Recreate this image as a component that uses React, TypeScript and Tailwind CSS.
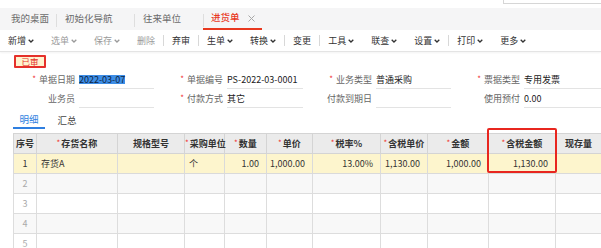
import React from "react";

const tabs = [
  { label: "我的桌面", w: "w-[57px]", pl: "pl-[11px]" },
  { label: "初始化导航", w: "w-[78px]", pl: "pl-[8px]" },
  { label: "往来单位", w: "w-[69px]", pl: "pl-[8px]" },
];

const tools = [
  { label: "新增", chev: true },
  { label: "选单", chev: true, off: true },
  { label: "保存", chev: true, off: true },
  { label: "删除", off: true, sep: true },
  { label: "弃审", sep: true },
  { label: "生单", chev: true },
  { label: "转换", chev: true, sep: true },
  { label: "变更", sep: true },
  { label: "工具", chev: true },
  { label: "联查", chev: true },
  { label: "设置", chev: true, sep: true },
  { label: "打印", chev: true },
  { label: "更多", chev: true },
];

const fieldRows = [
  [
    { label: "单据日期", req: true, value: "2022-03-07", selected: true },
    { label: "单据编号", req: true, value: "PS-2022-03-0001" },
    { label: "业务类型", req: true, value: "普通采购" },
    { label: "票据类型", req: true, value: "专用发票" },
  ],
  [
    { label: "业务员" },
    { label: "付款方式", req: true, value: "其它" },
    { label: "付款到期日" },
    { label: "使用预付", value: "0.00" },
  ],
];

const groupWidths = ["w-[148px]", "w-[149px]", "w-[148px]", "w-[150px]"];

const columns = [
  { title: "序号", w: 23 },
  { title: "存货名称", w: 81, req: true },
  { title: "规格型号", w: 67 },
  { title: "采购单位", w: 40, req: true },
  { title: "数量", w: 42, req: true },
  { title: "单价", w: 46, req: true },
  { title: "税率%", w: 68, req: true },
  { title: "含税单价", w: 47, req: true },
  { title: "金额", w: 61, req: true },
  { title: "含税金额", w: 67, req: true },
  { title: "现存量", w: 60 },
];

const firstRow = ["1", "存货A", "", "个", "1.00", "1,000.00", "13.00%", "1,130.00", "1,000.00", "1,130.00", ""];

function Chevron({ off }: { off?: boolean }) {
  return (
    <svg width="6" height="4" viewBox="0 0 6 4" className="ml-[2px] mt-[1px]">
      <polyline points="0.7,0.7 3,3 5.3,0.7" fill="none" stroke={off ? "#9a9a9a" : "#333"} strokeWidth="1.3" />
    </svg>
  );
}

function Req() {
  return <span className="text-[#f03030] text-[8px] mr-[3px] relative -top-[1px]">*</span>;
}

export default function App() {
  return (
    <div className="w-[601px] h-[248px] overflow-hidden bg-white font-['Noto_Sans_CJK_SC',sans-serif] text-[9px] text-[#333] leading-none">
      {/* top strip */}
      <div className="h-[8px] flex justify-end">
        <div className="w-[98px] h-[4px] border-l border-b border-[#d6d6d6]" />
      </div>

      {/* tab bar */}
      <div className="h-[22px] bg-[#f5f5f6] flex items-stretch text-[9.5px]">
        {tabs.map((t) => (
          <div key={t.label} className={`${t.w} ${t.pl} flex items-center justify-between text-[#6b6b6b]`}>
            <span>{t.label}</span>
            <span className="w-px h-[13px] bg-[#dedede] mt-[3px]" />
          </div>
        ))}
        <div className="w-[59px] ml-[-1px] flex items-center pl-[8px] border-b-2 border-[#e8381f] text-[#e8381f]">
          <span className="font-medium">进货单</span>
          <svg width="7" height="7" viewBox="0 0 7 7" className="ml-[8px]">
            <path d="M0.5 0.5L6.5 6.5M6.5 0.5L0.5 6.5" stroke="#a8a8a8" strokeWidth="1" />
          </svg>
        </div>
      </div>

      {/* toolbar */}
      <div className="h-[22px] flex items-center pl-[8px] border-b border-[#e4e4e4] shadow-[0_1px_2px_rgba(0,0,0,0.05)]">
        {tools.map((t, i) => (
          <React.Fragment key={t.label}>
            <div className={`flex items-center ${t.off ? "text-[#9a9a9a]" : "text-[#333]"} ${t.sep || i === tools.length - 1 ? "" : "mr-[17px]"}`}>
              <span>{t.label}</span>
              {t.chev && <Chevron off={t.off} />}
            </div>
            {t.sep && <span className="w-px h-[11px] bg-[#d8d8d8] mx-[8px]" />}
          </React.Fragment>
        ))}
      </div>

      {/* status */}
      <div className="pl-[14px] pt-[3px]">
        <div className="w-[32px] h-[13px] border-2 border-[#e5302a] bg-[#fff3cf] rounded-[1px] flex items-center justify-center text-[#e5302a] text-[8.5px]">
          已审
        </div>
      </div>

      {/* form */}
      <div className="mt-[2px] pl-[6px]">
        {fieldRows.map((row, ri) => (
          <div key={ri} className="flex">
            {row.map((f, fi) => (
              <div key={f.label} className={`${groupWidths[fi]} flex h-[19px] items-stretch`}>
                <div className="w-[69px] flex items-center justify-end text-[#666]">
                  {f.req && <Req />}
                  <span>{f.label}</span>
                </div>
                <div className="ml-[4px] flex-1 border-b border-[#e3e3e3] flex items-center text-[#222]">
                  {f.selected ? (
                    <span className="bg-[#3e8ee6] text-[#0d2444] h-[9px] leading-[9px] inline-block">{f.value}</span>
                  ) : (
                    <span>{f.value}</span>
                  )}
                </div>
              </div>
            ))}
          </div>
        ))}
      </div>

      {/* detail tabs */}
      <div className="flex pl-[13px] mt-[4px] text-[9.5px]">
        <div className="w-[32px] h-[17px] flex items-center justify-center border-b-2 border-[#2f7fe0] text-[#2f7fe0]">明细</div>
        <div className="w-[32px] h-[17px] ml-[6px] flex items-center justify-center text-[#444]">汇总</div>
      </div>

      {/* grid */}
      <div className="relative mt-[4px] pl-[13px]">
        <table className="table-fixed border-collapse w-[602px]">
          <colgroup>
            {columns.map((c) => (
              <col key={c.title} style={{ width: c.w }} />
            ))}
          </colgroup>
          <thead>
            <tr className="h-[20px] bg-[#ebebeb]">
              {columns.map((c, ci) => (
                <th
                  key={c.title}
                  className={`border border-[#d4d4d4] p-0 font-bold text-[#333] whitespace-nowrap ${ci === columns.length - 1 ? "text-left pl-[9px]" : "text-center"}`}
                >
                  {c.req && <span className="text-[#f03030] text-[8px] font-normal mr-[1px] relative -top-[1px]">*</span>}
                  {c.title}
                </th>
              ))}
            </tr>
          </thead>
          <tbody>
            <tr className="h-[20px] bg-[#fdf5cd]">
              {firstRow.map((v, ci) => (
                <td
                  key={ci}
                  className={`border border-[#dadada] p-0 whitespace-nowrap ${ci === 0 ? "text-center" : ci <= 3 ? "text-left pl-[4px]" : "text-right pr-[7px]"}`}
                >
                  {v}
                </td>
              ))}
            </tr>
            {[2, 3, 4, 5].map((n) => (
              <tr key={n} className={`h-[20px] ${n % 2 === 0 ? "bg-[#f8f8f8]" : "bg-white"}`}>
                {columns.map((c, ci) => (
                  <td key={c.title} className="border border-[#dddddd] p-0 text-center text-[#aaa]">
                    {ci === 0 ? n : ""}
                  </td>
                ))}
              </tr>
            ))}
          </tbody>
        </table>
        <div className="absolute left-[487px] top-[-5px] w-[70px] h-[45px] border-2 border-[#e8261f] rounded-[2px]" />
      </div>
    </div>
  );
}
